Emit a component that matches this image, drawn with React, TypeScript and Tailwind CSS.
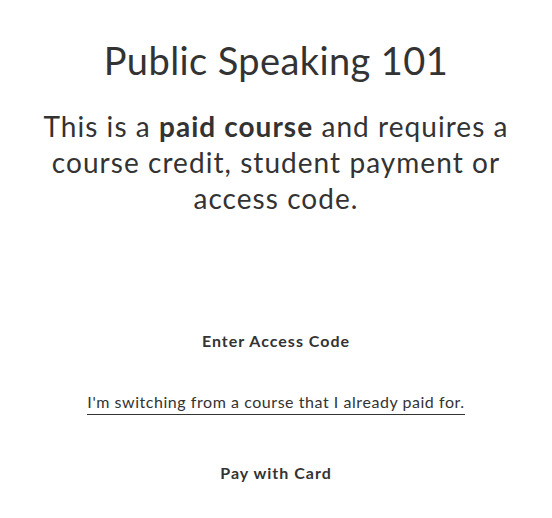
export default function App() {
  return (
    <div className="w-[552px] h-[518px] bg-white flex flex-col items-center text-[#333333] font-['Lato',sans-serif]">
      <h1 className="mt-[36px] text-[38px] leading-[48px] font-normal tracking-[0.4px]">
        Public Speaking 101
      </h1>
      <p className="mt-[24px] w-[500px] text-center text-[28px] leading-[36px] tracking-[1.05px]">
        This is a <b className="font-bold">paid course</b> and requires a course credit, student payment or access code.
      </p>
      <button className="mt-[113px] text-[16px] font-bold leading-[24px] tracking-[1px]">
        Enter Access Code
      </button>
      <a className="mt-[37px] text-[16px] leading-[24px] tracking-[0.55px] border-b border-[#333333]">
        I'm switching from a course that I already paid for.
      </a>
      <button className="mt-[46px] text-[16px] font-bold leading-[24px] tracking-[1px]">
        Pay with Card
      </button>
    </div>
  );
}
